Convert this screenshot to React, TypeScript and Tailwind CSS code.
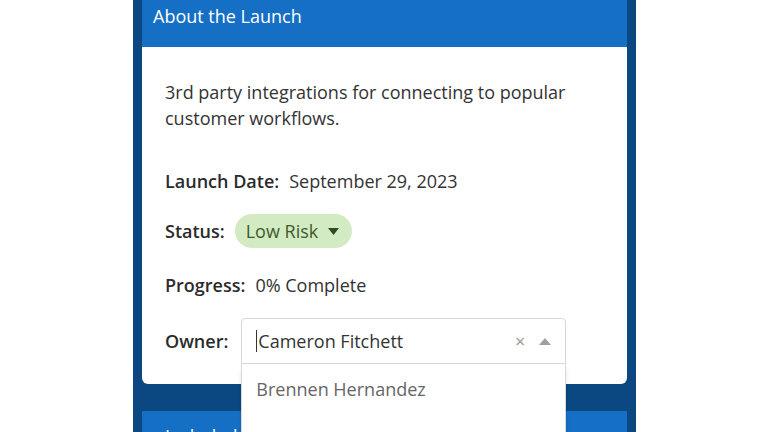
import React from "react";

const owners = ["Brennen Hernandez", "Caleb Carroll", "Dana Whitfield"];

const Row = ({ label, className, children }: { label: string; className: string; children: React.ReactNode }) => (
  <div className={`flex items-center gap-[10px] ${className}`}>
    <span className="font-semibold text-[#2b2b2b]">{label}</span>
    {children}
  </div>
);

const App = () => {
  return (
    <div
      className="h-[432px] w-[768px] overflow-hidden bg-white text-[18px]"
      style={{ fontFamily: "'Open Sans', 'Noto Sans', sans-serif" }}
    >
      <div className="ml-[133px] flex h-full w-[503px] flex-col gap-[27px] bg-[#0b4781] px-[9px]">
        <div className="shrink-0 rounded-b-md bg-white">
          <div className="flex h-[47px] items-start bg-[#1570c5] px-[11px] pt-[3px]">
            <h2 className="text-[18px] font-medium text-white">About the Launch</h2>
          </div>
          <div className="flex flex-col px-[23px] pb-[20px] pt-[32px] text-[#333]">
            <p className="leading-[26px]">
              3rd party integrations for connecting to popular
              <br />
              customer workflows.
            </p>
            <Row label="Launch Date:" className="mt-[37px] h-[26px]">
              <span>September 29, 2023</span>
            </Row>
            <Row label="Status:" className="mt-[20px] h-[34px]">
              <button className="flex h-[34px] items-center gap-[10px] rounded-full bg-[#d3ebc2] pl-[11px] pr-[13px] text-[#3d5a2c]">
                Low Risk
                <svg width="11" height="7" viewBox="0 0 11 7">
                  <path d="M0 0h11L5.5 7z" fill="#2f4a20" />
                </svg>
              </button>
            </Row>
            <Row label="Progress:" className="mt-[24px] h-[26px]">
              <span>0% Complete</span>
            </Row>
            <div className="mt-[20px] flex h-[46px] items-center gap-[13px]">
              <span className="font-semibold text-[#2b2b2b]">Owner:</span>
              <div className="relative w-[325px]">
                <div className="flex h-[46px] items-center rounded-t border border-[#d8d8d8] bg-white px-[14px]">
                  <span className="mr-px h-[22px] w-px bg-[#333]" />
                  <span className="flex-1 text-[#333]">Cameron Fitchett</span>
                  <span className="mr-[14px] text-[18px] leading-none text-[#999]">×</span>
                  <svg width="12" height="7" viewBox="0 0 12 7">
                    <path d="M6 0L12 7H0z" fill="#a0a0a0" />
                  </svg>
                </div>
                <ul className="absolute left-0 top-[46px] z-10 w-full border border-t-0 border-[#d8d8d8] bg-white shadow-md">
                  {owners.map((name) => (
                    <li key={name} className="flex h-[50px] items-center px-[14px] text-[#666]">
                      {name}
                    </li>
                  ))}
                </ul>
              </div>
            </div>
          </div>
        </div>
        <div className="shrink-0 rounded-t-md bg-white">
          <div className="flex h-[47px] items-start bg-[#1570c5] px-[23px] pt-[12px]">
            <h2 className="text-[18px] font-medium text-white">Included Features</h2>
          </div>
        </div>
      </div>
    </div>
  );
};

export default App;
